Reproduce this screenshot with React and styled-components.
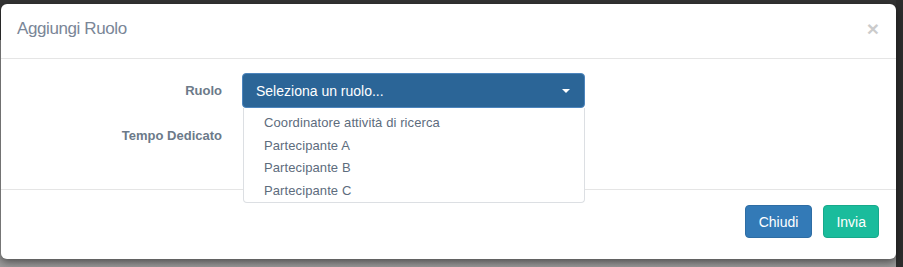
import React, { useState } from 'react'
import styled, { createGlobalStyle } from 'styled-components'

const GlobalStyle = createGlobalStyle`
    html, body {
        margin: 0;
        padding: 0;
    }
    body {
        width: 903px;
        height: 267px;
        overflow: hidden;
        font-family: "Liberation Sans", Arial, sans-serif;
        background:
            linear-gradient(to left, #2d2d2d 7px, transparent 7px),
            linear-gradient(to bottom, #333 40px, #8f8f8f 40px, #9a9a9a 100%);
    }
`

const roles = [
    'Coordinatore attività di ricerca',
    'Partecipante A',
    'Partecipante B',
    'Partecipante C',
]

export default function App() {
    const [open] = useState(true)
    return (
        <>
            <GlobalStyle />
            <Backdrop>
                <Modal>
                    <Header>
                        <Title>Aggiungi Ruolo</Title>
                        <Close aria-label="Close">×</Close>
                    </Header>
                    <Body>
                        <FormRow>
                            <Label>Ruolo</Label>
                            <SelectWrap>
                                <SelectButton>
                                    <span>Seleziona un ruolo...</span>
                                    <Caret />
                                </SelectButton>
                                {open && (
                                    <Menu>
                                        {roles.map((r, k) => <MenuItem key={k}>{r}</MenuItem>)}
                                    </Menu>
                                )}
                            </SelectWrap>
                        </FormRow>
                        <FormRow>
                            <Label>Tempo Dedicato</Label>
                            <div />
                        </FormRow>
                    </Body>
                    <Footer>
                        <Button variant="primary">Chiudi</Button>
                        <Button variant="success">Invia</Button>
                    </Footer>
                </Modal>
            </Backdrop>
        </>
    )
}

const Backdrop = styled.div`
    padding: 4px 7px 8px 1px;
`

const Modal = styled.div`
    background: #fff;
    border-radius: 6px;
    box-shadow: 0 3px 9px rgba(0, 0, 0, 0.5);
    display: flex;
    flex-direction: column;
`

const Header = styled.div`
    display: flex;
    align-items: center;
    justify-content: space-between;
    padding: 15px 17px 15px 16px;
    border-bottom: 1px solid #e5e5e5;
`

const Title = styled.h4`
    margin: -2px 0 2px;
    font-size: 17px;
    letter-spacing: -0.4px;
    font-weight: normal;
    line-height: 24px;
    color: #7a8697;
`

const Close = styled.button`
    background: none;
    border: 0;
    padding: 0;
    margin-top: -5px;
    font-family: "Liberation Sans", Arial, sans-serif;
    font-size: 21px;
    font-weight: bold;
    line-height: 1;
    color: #000;
    opacity: 0.2;
    cursor: pointer;
`

const Body = styled.div`
    display: flex;
    flex-direction: column;
    gap: 10px;
    padding: 14px 0 36px 16px;
`

const FormRow = styled.div`
    display: grid;
    grid-template-columns: 205px 343px;
    column-gap: 20px;
    align-items: center;
    height: 35px;
`

const Label = styled.label`
    text-align: right;
    font-size: 13px;
    font-weight: bold;
    color: #6c7a89;
`

const SelectWrap = styled.div`
    position: relative;
    height: 35px;
`

const SelectButton = styled.div`
    box-sizing: border-box;
    height: 35px;
    display: flex;
    align-items: center;
    justify-content: space-between;
    padding: 0 13px 0 13px;
    background: #2b6597;
    border: 1px solid #4d85bd;
    border-radius: 4px;
    color: #fff;
    font-size: 14px;
`

const Caret = styled.span`
    width: 0;
    height: 0;
    margin-right: 1px;
    border-left: 4px solid transparent;
    border-right: 4px solid transparent;
    border-top: 4px solid #fff;
`

const Menu = styled.div`
    position: absolute;
    top: 100%;
    left: 1px;
    right: 0;
    z-index: 2;
    background: #fff;
    border: 1px solid #dcdfe3;
    border-top: 0;
    border-radius: 0 0 4px 4px;
    padding: 4px 0 0;
`

const MenuItem = styled.div`
    height: 22.5px;
    line-height: 22.5px;
    padding-left: 20px;
    font-size: 13px;
    letter-spacing: 0.1px;
    color: #5d6c7d;
`

const Footer = styled.div`
    display: flex;
    justify-content: flex-end;
    gap: 11px;
    padding: 15px 17px 21px;
    border-top: 1px solid #e5e5e5;
`

const Button = styled.button`
    height: 33px;
    padding: 0 ${p => (p.variant === 'success' ? 12 : 13)}px;
    font-family: "Liberation Sans", Arial, sans-serif;
    font-size: 14px;
    color: #fff;
    border-radius: 4px;
    border: 1px solid ${p => (p.variant === 'success' ? '#17a98b' : '#2e6da4')};
    background: ${p => (p.variant === 'success' ? '#1abc9c' : '#337ab7')};
    cursor: pointer;
`
